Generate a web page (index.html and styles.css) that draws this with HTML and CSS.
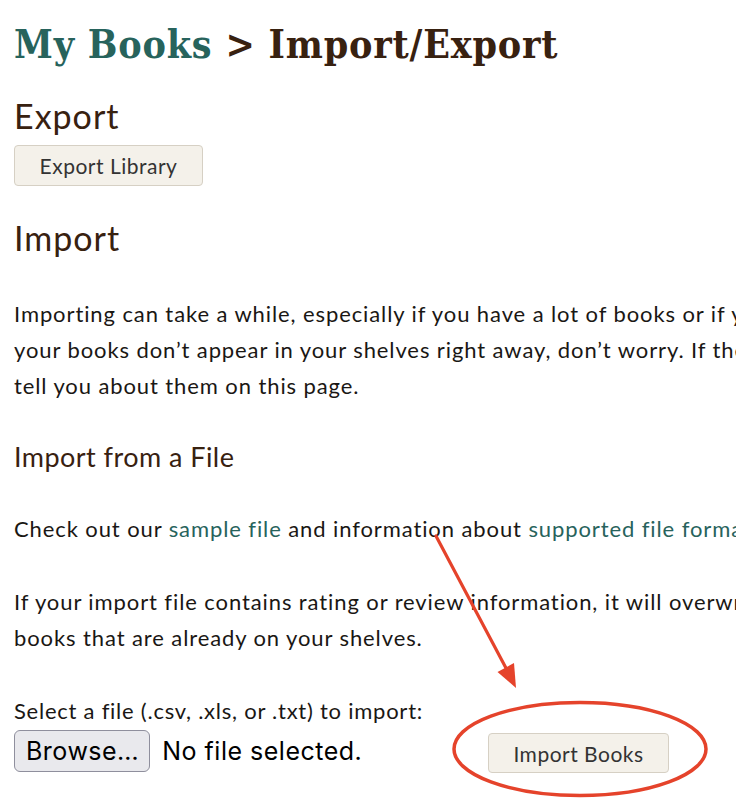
FILE: index.html
```html
<!DOCTYPE html>
<html lang="en">
<head>
<meta charset="utf-8">
<title>My Books &gt; Import/Export</title>
<link rel="stylesheet" href="styles.css">
</head>
<body>
<main class="page">
  <h1 class="title"><a class="crumb" href="#">My Books</a> &gt; Import/Export</h1>

  <section class="export">
    <h2 class="section-title">Export</h2>
    <button class="btn btn-export" type="button">Export Library</button>
  </section>

  <section class="import">
    <h2 class="section-title section-title-import">Import</h2>
    <p class="text">Importing can take a while, especially if you have a lot of books or if you’re importing from another site. If<br>your books don’t appear in your shelves right away, don’t worry. If there are any problems with your import, we’ll<br>tell you about them on this page.</p>

    <h3 class="sub-title">Import from a File</h3>
    <p class="text">Check out our <a class="link" href="#">sample file</a> and information about <a class="link" href="#">supported file formats</a>.</p>
    <p class="text">If your import file contains rating or review information, it will overwrite any ratings or reviews you have for<br>books that are already on your shelves.</p>

    <form class="upload">
      <label class="upload-label">Select a file (.csv, .xls, or .txt) to import:</label>
      <div class="upload-row">
        <span class="file-input">
          <span class="browse">Browse…</span>
          <span class="file-status">No file selected.</span>
        </span>
        <button class="btn btn-import" type="button">Import Books</button>
      </div>
    </form>
  </section>

  <svg class="annotation" width="736" height="806" viewBox="0 0 736 806" aria-hidden="true">
    <line x1="436" y1="536" x2="507" y2="670" stroke="#e5432b" stroke-width="3.2" stroke-linecap="round"/>
    <polygon points="516,688 497.5,672 514,663" fill="#e5432b"/>
    <ellipse cx="580" cy="749" rx="126" ry="46.5" fill="none" stroke="#e5432b" stroke-width="3.5"/>
  </svg>
</main>
</body>
</html>
```

FILE: styles.css
```css
html {
  overflow: hidden;
}

body {
  margin: 0;
  background: #ffffff;
  color: #1a1714;
  font-family: "Lato", "Open Sans", sans-serif;
}

.page {
  position: relative;
  box-sizing: border-box;
  min-height: 806px;
  padding: 22px 0 0 14px;
}

.title {
  margin: 0;
  font-family: "DejaVu Serif", "Liberation Serif", serif;
  font-stretch: condensed;
  font-weight: 700;
  font-size: 39px;
  letter-spacing: 0.8px;
  line-height: 44px;
  color: #382110;
  white-space: nowrap;
}

.crumb {
  color: #27635c;
  text-decoration: none;
}

.section-title {
  margin: 31px 0 10px;
  font-weight: 400;
  font-size: 34px;
  letter-spacing: 1px;
  line-height: 38px;
  color: #382110;
}

.section-title-import {
  margin-top: 33px;
  margin-bottom: 39px;
}

.btn {
  display: inline-flex;
  align-items: center;
  justify-content: center;
  height: 41px;
  box-sizing: border-box;
  padding: 0 20px;
  background: #f4f1ea;
  border: 1px solid #d6d0c4;
  border-radius: 4px;
  font-family: "Lato", sans-serif;
  font-size: 21px;
  letter-spacing: 0.5px;
  color: #333333;
}

.btn-export {
  width: 189px;
}

.text {
  margin: 0 0 37px;
  font-size: 22px;
  letter-spacing: 0.9px;
  line-height: 36px;
  white-space: nowrap;
}

.link {
  color: #27635c;
  text-decoration: none;
}

.sub-title {
  margin: 0 0 39px;
  font-weight: 400;
  font-size: 27px;
  letter-spacing: 0.45px;
  line-height: 31px;
  color: #382110;
}

.upload-label {
  display: block;
  font-size: 22px;
  letter-spacing: 0.75px;
  line-height: 36px;
  white-space: nowrap;
}

.upload-row {
  display: flex;
  align-items: flex-start;
  margin-top: 1px;
}

.file-input {
  display: flex;
  align-items: center;
  gap: 12px;
  width: 474px;
  font-family: "Inter", "Noto Sans", sans-serif;
  font-size: 25px;
  letter-spacing: 0.5px;
  color: #000000;
}

.browse {
  display: inline-flex;
  align-items: center;
  height: 42px;
  box-sizing: border-box;
  padding: 0 10px 0 11px;
  background: #e9e9ed;
  border: 1.5px solid #8f8f9d;
  border-radius: 6px;
}

.btn-import {
  width: 181px;
  height: 40px;
  margin-top: 3px;
}

.annotation {
  position: absolute;
  top: 0;
  left: 0;
  pointer-events: none;
}
```
